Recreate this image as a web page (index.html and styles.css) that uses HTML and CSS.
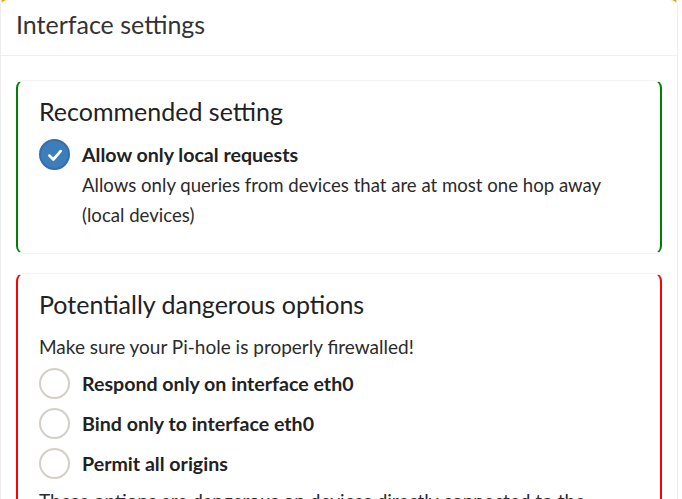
FILE: index.html
```html
<!DOCTYPE html>
<html>

<head>
    <meta charset="utf-8" />
    <title>Interface settings</title>
    <link rel="stylesheet" href="styles.css">
</head>

<body>
    <div class="box">
        <div class="box-header">
            <h3>Interface settings</h3>
        </div>
        <div class="box-body">
            <div class="inner inner-ok">
                <h4>Recommended setting</h4>
                <div class="opt">
                    <span class="tick on">
                        <svg width="18" height="18" viewBox="0 0 16 16"><polyline points="3,8.5 6.5,12 13,4.5" fill="none" stroke="#fff" stroke-width="2.4" stroke-linecap="round" stroke-linejoin="round"/></svg>
                    </span>
                    <div class="opt-text">
                        <label>Allow only local requests</label>
                        <p>Allows only queries from devices that are at most one hop away (local devices)</p>
                    </div>
                </div>
            </div>
            <div class="inner inner-danger">
                <h4>Potentially dangerous options</h4>
                <p class="warn">Make sure your Pi-hole is properly firewalled!</p>
                <div class="opt radio">
                    <span class="tick"></span>
                    <div class="opt-text"><label>Respond only on interface eth0</label></div>
                </div>
                <div class="opt radio">
                    <span class="tick"></span>
                    <div class="opt-text"><label>Bind only to interface eth0</label></div>
                </div>
                <div class="opt radio">
                    <span class="tick"></span>
                    <div class="opt-text"><label>Permit all origins</label></div>
                </div>
                <p class="note">These options are dangerous on devices directly connected to the Internet such as cloud instances and are only safe if your Pi-hole is properly firewalled.</p>
            </div>
        </div>
    </div>
</body>

</html>
```

FILE: styles.css
```css
* {
    margin: 0;
    padding: 0;
    box-sizing: border-box;
}

body {
    font-family: Lato, "Noto Sans", sans-serif;
    color: #2b2b2b;
    background: #fff;
    overflow: hidden;
}

.box {
    width: 678px;
    margin-top: -3px;
    border: 1px solid #ededed;
    border-top: 3px solid #f39c12;
    border-radius: 8px;
}

.box-header {
    height: 56px;
    padding: 0 15px;
    border-bottom: 1px solid #efefef;
    display: flex;
    align-items: center;
}

.box-header h3 {
    font-size: 25px;
    font-weight: 400;
    color: #333;
    margin-top: -7px;
}

.box-body {
    padding: 24px 15px;
}

.inner {
    border: 1px solid #f3f3f3;
    border-radius: 8px;
    padding: 14px 22px 23px 21px;
}

.inner-ok {
    border-left: 2px solid #008000;
    border-right: 2px solid #008000;
}

.inner-danger {
    margin-top: 19px;
    border-left: 2px solid #ff0000;
    border-right: 2px solid #ff0000;
}

.inner h4 {
    font-size: 25px;
    font-weight: 400;
    line-height: 32px;
    color: #222;
    margin-bottom: 12px;
}

.opt {
    display: flex;
    align-items: flex-start;
    gap: 12px;
}

.tick {
    flex: none;
    width: 31px;
    height: 31px;
    border-radius: 50%;
    border: 2px solid #d3cfc8;
    background: #fff;
    display: flex;
    align-items: center;
    justify-content: center;
}

.tick.on {
    background: #3d7dba;
    border-color: #3170ac;
}

.opt label {
    display: block;
    font-weight: 700;
    font-size: 19.6px;
    line-height: 31px;
    color: #222;
}

.opt p {
    font-size: 18.6px;
    line-height: 30px;
}

.warn {
    font-size: 19px;
    line-height: 30px;
    margin-bottom: 6px;
}

.radio {
    margin-bottom: 9px;
}

.note {
    font-size: 19px;
    line-height: 30px;
    margin-top: -2px;
}
```
